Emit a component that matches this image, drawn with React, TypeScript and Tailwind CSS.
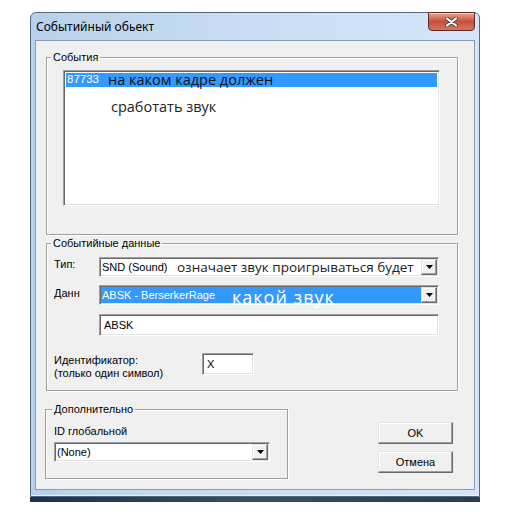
import React from "react";

const ui = "font-['Liberation_Sans',Arial,sans-serif] text-[11px] text-black";
const note = "font-['Open_Sans','Noto_Sans',sans-serif]";

const sunken =
  "border border-t-[#a0a0a0] border-l-[#a0a0a0] border-b-white border-r-white shadow-[inset_1px_1px_0_#696969,inset_-1px_-1px_0_#e3e3e3]";
const raised =
  "border border-t-[#e3e3e3] border-l-[#e3e3e3] border-b-[#696969] border-r-[#696969] shadow-[inset_-1px_-1px_0_#a0a0a0,inset_1px_1px_0_#ffffff] bg-[#f0f0f0]";

const DropButton = () => (
  <div className={`${raised} flex h-full w-[16px] shrink-0 items-center justify-center`}>
    <svg width="7" height="4" viewBox="0 0 7 4">
      <path d="M0 0 H7 L3.5 4 Z" fill="#000" />
    </svg>
  </div>
);

const Combo = ({ className, children }: { className?: string; children: React.ReactNode }) => (
  <div className={`${sunken} flex h-[20px] items-stretch bg-white p-[1px] ${className ?? ""}`}>
    <div className="flex min-w-0 flex-1 items-center">{children}</div>
    <DropButton />
  </div>
);

const Group = ({
  title,
  className,
  legendClass,
  children,
}: {
  title: string;
  className?: string;
  legendClass?: string;
  children: React.ReactNode;
}) => (
  <fieldset
    className={`border border-[#a0a0a0] shadow-[inset_1px_1px_0_#ffffff,1px_1px_0_#ffffff] ${className ?? ""}`}
  >
    <legend className={`px-[2px] leading-[12px] ${legendClass ?? "ml-[4px]"}`}>{title}</legend>
    {children}
  </fieldset>
);

export default function App() {
  return (
    <div className={`h-[512px] w-[512px] overflow-hidden bg-white ${ui}`}>
      {/* window */}
      <div className="ml-[30px] mt-[12px] flex h-[485px] w-[450px] flex-col rounded-t-[6px] border border-[#56687c] bg-gradient-to-r from-[#b8d1eb] via-[#c9def4] to-[#d3e6f9]">
        {/* title bar */}
        <div className="flex h-[27px] shrink-0 items-start justify-between">
          <span className="ml-[5px] mt-[6px] font-['Noto_Sans','Open_Sans',sans-serif] text-[12px] leading-[16px] text-black">
            Событийный обьект
          </span>
          <div className="-mt-px mr-[4px] flex h-[19px] w-[47px] items-center justify-center rounded-b-[4px] border border-[#5c2a22] bg-gradient-to-b from-[#e9a597] via-[#c84f3d] to-[#d9725c] shadow-[inset_0_1px_0_rgba(255,255,255,0.5)]">
            <svg width="13" height="10" viewBox="0 0 13 10">
              <path d="M2 1.5 L11 8.5 M11 1.5 L2 8.5" stroke="#4a4a4a" strokeWidth="4" strokeLinecap="round" />
              <path d="M2 1.5 L11 8.5 M11 1.5 L2 8.5" stroke="#ffffff" strokeWidth="2.2" strokeLinecap="round" />
            </svg>
          </div>
        </div>

        {/* client area */}
        <div className="mx-[4px] h-[450px] shrink-0 border border-[#8a9bb0] bg-[#f0f0f0]">
          {/* События */}
          <Group title="События" className="ml-[10px] mt-[10px] h-[184px] w-[412px]">
            <div className={`${sunken} ml-[16px] mt-[7px] h-[136px] w-[377px] bg-white p-[2px]`}>
              <div className="flex h-[14px] items-center bg-[#3399ff] pl-[1px]">
                <span className="w-[41px] shrink-0 text-[11.5px] text-white">87733</span>
                <span className={`${note} whitespace-nowrap text-[14.5px] leading-[14px] text-[#111]`}>
                  на каком кадре должен
                </span>
              </div>
              <div className={`${note} mt-[12px] pl-[45px] text-[14.5px] leading-[16px] text-[#222]`}>
                сработать звук
              </div>
            </div>
          </Group>

          {/* Событийные данные */}
          <Group title="Событийные данные" className="ml-[10px] mt-[2px] h-[154px] w-[412px]">
            <div className="flex flex-col pl-[7px]">
              <div className="mt-[8px] flex items-start">
                <span className="mt-[1px] w-[45px] shrink-0 leading-[13px]">Тип:</span>
                <Combo className="w-[340px]">
                  <span className="w-[76px] shrink-0 whitespace-nowrap pl-[1px]">SND (Sound)</span>
                  <span className={`${note} whitespace-nowrap text-[13.5px] leading-[14px] text-[#222]`}>
                    означает звук проигрываться будет
                  </span>
                </Combo>
              </div>
              <div className="mt-[8px] flex items-start">
                <span className="mt-[2px] w-[29px] shrink-0 overflow-hidden whitespace-nowrap leading-[13px]">
                  Данн
                </span>
                <div className="w-[16px] shrink-0" />
                <Combo className="w-[340px]">
                  <div className="flex h-full flex-1 items-center bg-[#3399ff] text-white">
                    <span className="w-[131px] shrink-0 whitespace-nowrap pl-[1px]">ABSK - BerserkerRage</span>
                    <span className={`${note} mt-[4px] whitespace-nowrap text-[18px] leading-[16px] tracking-[1px]`}>
                      какой звук
                    </span>
                  </div>
                </Combo>
              </div>
              <div className="mt-[9px] flex">
                <div className="w-[45px] shrink-0" />
                <div className={`${sunken} flex h-[22px] w-[340px] items-center bg-white pl-[4px]`}>ABSK</div>
              </div>
              <div className="mt-[17px] flex items-start">
                <div className="mt-[1px] w-[148px] shrink-0 leading-[13px]">
                  <div>Идентификатор:</div>
                  <div>(только один символ)</div>
                </div>
                <div className={`${sunken} flex h-[22px] w-[52px] items-center bg-white pl-[4px]`}>X</div>
              </div>
            </div>
          </Group>

          {/* bottom row */}
          <div className="flex items-start">
            <Group
              title="Дополнительно"
              legendClass="ml-[6px]"
              className="ml-[9px] mt-[12px] h-[76px] w-[243px]"
            >
              <div className="flex flex-col pl-[8px]">
                <span className="mt-[10px] leading-[13px]">ID глобальной</span>
                <Combo className="mt-[4px] w-[216px]">
                  <span className="pl-[1px]">(None)</span>
                </Combo>
              </div>
            </Group>
            <div className="ml-[90px] mt-[31px] flex flex-col gap-[7px]">
              <button className={`${raised} h-[22px] w-[75px] text-[11px]`}>OK</button>
              <button className={`${raised} h-[22px] w-[75px] text-[11px]`}>Отмена</button>
            </div>
          </div>
        </div>

        {/* bottom frame */}
        <div className="flex-1 shadow-[inset_0_-1px_0_#eaf3fc]" />
      </div>
      <div className="ml-[30px] h-[5px] w-[450px] bg-gradient-to-r from-[#1d3149] via-[#3f4c5a] to-[#2e3a46]" />
    </div>
  );
}
